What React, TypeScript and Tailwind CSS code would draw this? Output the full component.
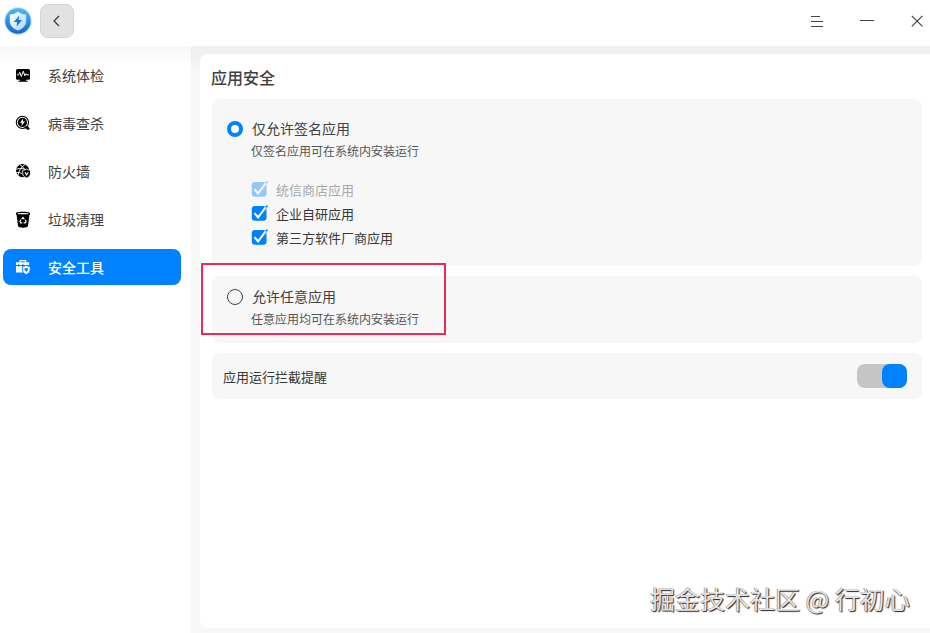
import type { ReactNode } from 'react';

const ink = '#000';

function ShieldLogo() {
  return (
    <svg width="28" height="28" viewBox="0 0 28 28" className="shrink-0">
      <defs>
        <linearGradient id="disc" x1="0" y1="0" x2="0" y2="1">
          <stop offset="0" stopColor="#49b9f6" />
          <stop offset="1" stopColor="#1767ce" />
        </linearGradient>
        <linearGradient id="shield" x1="0" y1="0" x2="1" y2="1">
          <stop offset="0" stopColor="#ffffff" />
          <stop offset="1" stopColor="#a9d7f7" />
        </linearGradient>
      </defs>
      <circle cx="14" cy="14" r="13.7" fill="#b5dcf7" />
      <circle cx="14" cy="14" r="12.7" fill="url(#disc)" />
      <path d="M14 4.6C11.8 6.8 9 7.4 5.8 7.5v6.7c0 4.2 3.3 7.4 8.2 9.4 4.9-2 8.2-5.2 8.2-9.4V7.5C19 7.4 16.2 6.8 14 4.6Z" fill="url(#shield)" />
      <path d="M15.2 8.8 9.8 15h3.3l-.5 4.7 5.4-6.7h-3.4z" fill="#1976d8" />
    </svg>
  );
}

function MonitorIcon() {
  return (
    <svg width="16" height="16" viewBox="0 0 16 16">
      <rect x="1" y="2" width="14" height="10.7" rx="1.5" fill={ink} />
      <path d="M5 12h6v2H5zM3.3 13.7h9.4v1H3.3z" fill={ink} />
      <path d="M2 7.8h1.6l1.2-2.5 1.5 4.2 2-5.3 1.5 4.6 1.1-2 .8 1H14" stroke="#fff" strokeWidth="1" fill="none" />
    </svg>
  );
}

function ScanIcon() {
  return (
    <svg width="16" height="16" viewBox="0 0 16 16">
      <circle cx="7.4" cy="7.4" r="6.1" stroke={ink} strokeWidth="1.1" fill="none" />
      <circle cx="7.4" cy="7.4" r="4.6" fill={ink} />
      <path d="M8.2 3.5 4.9 7.8h2l-.5 3.4 3.6-4.6H7.9z" fill="#fff" />
      <path d="m10 12.8 2.6-2 2.2 2.9-1.5 1.4z" fill={ink} />
      <path d="m9.6 12 3.8 1.9" stroke={ink} strokeWidth="1.6" />
    </svg>
  );
}

function FirewallIcon() {
  return (
    <svg width="16" height="16" viewBox="0 0 16 16">
      <circle cx="7.6" cy="7.6" r="6.6" fill={ink} />
      <path d="M1 6.2c4-1 8-1 12 1.5M3 13c.5-5 3-9 7.4-11.8M5 2c3 1.5 5 4 5.5 8M1 9.8c2.4-.7 5-.2 7.2 1.6" stroke="#fff" strokeWidth=".9" fill="none" />
      <path d="M11.6 6.1c1.2.8 2.3 1.1 3.9 1.2v3c0 2.3-1.5 3.9-3.9 4.8-2.4-.9-3.9-2.5-3.9-4.8v-3c1.6-.1 2.7-.4 3.9-1.2Z" fill={ink} stroke="#fff" strokeWidth=".8" />
      <path d="m10 9.4 1.6 2.5 1.7-2.5" stroke="#fff" strokeWidth="1.1" fill="none" />
    </svg>
  );
}

function TrashIcon() {
  return (
    <svg width="16" height="17" viewBox="0 0 16 17">
      <path d="M1 2.2C1 .2 15 .2 15 2.2v1.5h-.6l-1.4 11.4c-.2 2.1-9.8 2.1-10 0L1.6 3.7H1z" fill={ink} />
      <path d="M2.5 2.6c2.2-.8 8.8-.8 11 0v.6h-11z" fill="#fff" />
      <path d="m6.6 8.3 1.3-1.9 1.5 2M10.2 8.9l1 1.7-1 1.3H8.6M7.3 11.9H5.7l-.8-1.3 1.1-1.9" stroke="#fff" strokeWidth="1.1" fill="none" />
    </svg>
  );
}

function ToolboxIcon() {
  return (
    <svg width="16" height="16" viewBox="0 0 16 16">
      <path d="M5 3.5V1.6h5.6v1.9" stroke="#fff" strokeWidth="1.1" fill="none" />
      <path d="M1 3.2h13.2v2.7H1zM1 6.9h13.2v6.6H1z" fill="#fff" />
      <path d="M3.7 4.8v2.8M7.9 4.8V7" stroke="#0081ff" strokeWidth="1" />
      <path d="M11.3 6.3c1.3.8 2.3 1.1 3.9 1.2v3c0 2.4-1.5 4-3.9 5-2.4-1-3.9-2.6-3.9-5v-3c1.6-.1 2.6-.4 3.9-1.2Z" fill="#fff" stroke="#0081ff" strokeWidth=".9" />
      <path d="M11.3 9v4.2M9.8 9.6h3v1.3l-1.5 1.4-1.5-1.4z" stroke="#0081ff" strokeWidth=".6" fill="#0081ff" />
    </svg>
  );
}

function NavItem({ icon, label, active = false }: { icon: ReactNode; label: string; active?: boolean }) {
  return (
    <div className={`flex h-9 w-[178px] items-center gap-[17px] rounded-lg pl-3 text-sm ${active ? 'bg-[#0081ff] font-medium text-white' : 'text-[#414141]'}`}>
      {icon}
      <span className="pb-px leading-5">{label}</span>
    </div>
  );
}

function CheckRow({ label, disabled = false }: { label: string; disabled?: boolean }) {
  return (
    <div className={`flex h-6 items-center gap-[7px] text-[13px] ${disabled ? 'text-[#a9a9a9]' : 'text-[#383838]'}`}>
      <svg width="18" height="18" viewBox="0 0 18 18" className={`-mt-[3px] ${disabled ? 'opacity-40' : ''}`}>
        <rect x=".8" y="2" width="14.7" height="14.7" rx="3.2" fill="#0081ff" />
        <path d="m3.5 9.2 3.6 4.1L15.7 1.8" stroke="#fff" strokeWidth="2" fill="none" />
        <path d="m14 3 2.1-2.1 1 1-2 2.2z" fill="#0081ff" />
      </svg>
      <span className="pb-px">{label}</span>
    </div>
  );
}

function RadioOption({ title, detail, checked = false }: { title: string; detail: string; checked?: boolean }) {
  return (
    <div className="flex gap-[9px]">
      <div className={`mt-[2px] size-4 shrink-0 rounded-full ${checked ? 'border-4 border-[#0081ff] bg-white' : 'border border-[#454545]'}`} />
      <div className="-mt-px">
        <div className="h-[21px] text-sm leading-5 text-[#414141]">{title}</div>
        <div className="-ml-px h-6 text-xs leading-6 text-[#555]">{detail}</div>
      </div>
    </div>
  );
}

export default function App() {
  return (
    <div className="relative flex h-[633px] w-[930px] flex-col overflow-hidden bg-white font-['Noto_Sans_CJK_SC',sans-serif]">
      <header className="flex h-[46px] shrink-0 items-start justify-between pl-1 pt-1">
        <div className="flex items-center gap-2">
          <ShieldLogo />
          <button className="flex size-[34px] items-center justify-center rounded-lg border border-[#d4d4d4] bg-[#e2e2e2]">
            <svg width="8" height="12" viewBox="0 0 8 12"><path d="M6 1 1 6l5 5" stroke="#333" strokeWidth="1.2" fill="none" /></svg>
          </button>
        </div>
        <div className="flex pt-[11px]">
          <svg width="120" height="14" viewBox="0 0 120 14" fill="none" stroke="#444">
            <path d="M1 1.5h9M1 6.5h12M1 11.5h12M50 5.5h14" />
            <path d="M101.8.8l10.6 10.6m0-10.6-10.6 10.6" strokeWidth="1.2" />
          </svg>
        </div>
      </header>
      <div className="flex min-h-0 flex-1">
        <aside className="w-[191px] shrink-0 bg-linear-to-b from-[#f8f8f8] to-white to-[20px] pl-[3px] pt-[11px]">
          <nav className="flex flex-col gap-3">
            <NavItem icon={<MonitorIcon />} label="系统体检" />
            <NavItem icon={<ScanIcon />} label="病毒查杀" />
            <NavItem icon={<FirewallIcon />} label="防火墙" />
            <NavItem icon={<TrashIcon />} label="垃圾清理" />
            <NavItem icon={<ToolboxIcon />} label="安全工具" active />
          </nav>
        </aside>
        <div className="flex-1 bg-linear-to-b from-[#f0f0f0] from-[8px] to-[#f8f8f8] to-[28px] pb-[5px] pl-[9px] pt-2">
          <main className="h-full rounded-l-lg bg-white pl-3 pr-2 pt-[11px]">
            <h1 className="-ml-px h-[34px] text-base font-medium leading-6 text-[#414141]">应用安全</h1>
            <section className="h-[167px] rounded-lg bg-[#f7f7f7] pl-[15px] pt-5">
              <RadioOption title="仅允许签名应用" detail="仅签名应用可在系统内安装运行" checked />
              <div className="ml-6 mt-[15px]">
                <CheckRow label="统信商店应用" disabled />
                <CheckRow label="企业自研应用" />
                <CheckRow label="第三方软件厂商应用" />
              </div>
            </section>
            <section className="mt-[10px] h-[67px] rounded-lg bg-[#f7f7f7] pl-[15px] pt-[11px]">
              <RadioOption title="允许任意应用" detail="任意应用均可在系统内安装运行" />
            </section>
            <section className="mt-[10px] flex h-[46px] items-center justify-between rounded-lg bg-[#f7f7f7] pl-[11px] pr-[15px] text-[13px] text-[#383838]">
              <span className="pt-px">应用运行拦截提醒</span>
              <div className="flex h-6 w-[50px] justify-end rounded-lg bg-[#c5c5c5]">
                <div className="h-6 w-[25px] rounded-lg bg-[#0081ff]" />
              </div>
            </section>
          </main>
        </div>
      </div>
      <div className="absolute left-[201px] top-[263px] h-[72px] w-[245px] border-2 border-[#ed2a59]" />
      <div className="absolute left-[650px] top-[580px] whitespace-nowrap text-[25px] leading-9 text-[#e4e4e4] [text-shadow:1px_1px_1px_#222,-0.5px_-0.5px_0_#777]">掘金技术社区 @ 行初心</div>
    </div>
  );
}
